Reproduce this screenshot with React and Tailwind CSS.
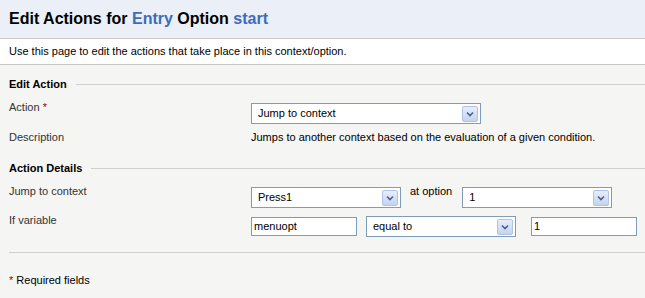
import React from "react";

const font = { fontFamily: '"Liberation Sans", Arial, sans-serif' };

function Arrow() {
  return (
    <span className="absolute right-[2px] top-1/2 -translate-y-1/2 flex h-[16px] w-[16px] items-center justify-center rounded-[2px] border border-[#b1c3e4] bg-gradient-to-b from-[#e6eefc] to-[#c3d3f1]">
      <svg width="8" height="6" viewBox="0 0 8 6">
        <path d="M1 1.5 L4 4.5 L7 1.5" fill="none" stroke="#4d6185" strokeWidth="1.6" />
      </svg>
    </span>
  );
}

function Select({ value, className }) {
  return (
    <div className={`relative flex h-[21px] items-center border border-[#7f9db9] bg-white pl-[6px] text-[11px] leading-[13px] text-black ${className}`}>
      {value}
      <Arrow />
    </div>
  );
}

function Input({ value, className }) {
  return (
    <div className={`flex h-[19px] items-center border border-[#7f9db9] bg-white pl-[2px] text-[11px] leading-[13px] text-black ${className}`}>
      {value}
    </div>
  );
}

function Section({ title, className }) {
  return (
    <div className={`flex h-[13px] items-center pl-[9px] ${className}`}>
      <span className="text-[11px] font-bold leading-[13px] text-black">{title}</span>
      <span className="ml-[9px] h-px flex-1 bg-[#cfcfcf]" />
    </div>
  );
}

export default function App() {
  return (
    <div className="h-[298px] w-[645px] overflow-hidden bg-[#f5f5f3] text-[11px] leading-[13px]" style={font}>
      <div className="flex h-[39px] items-center border-b border-[#c8c8c8] bg-[#ebeff8] pl-[9px]">
        <h1 className="text-[16px] font-bold leading-[20px] text-black">
          Edit Actions for <span className="text-[#3b6cbd]">Entry</span> Option <span className="text-[#3b6cbd]">start</span>
        </h1>
      </div>
      <div className="flex h-[26px] items-center border-b border-[#c8c8c8] bg-white pl-[9px] text-black">
        Use this page to edit the actions that take place in this context/option.
      </div>

      <Section title="Edit Action" className="mt-[13px]" />
      <div className="mt-[10px] flex items-start pl-[9px]">
        <div className="w-[242px] text-[#333]">
          Action <span className="text-[#a00000]">*</span>
        </div>
        <Select value="Jump to context" className="mt-[2px] w-[230px]" />
      </div>
      <div className="mt-[7px] flex pl-[9px]">
        <div className="w-[242px] text-[#333]">Description</div>
        <div className="text-black">Jumps to another context based on the evaluation of a given condition.</div>
      </div>

      <Section title="Action Details" className="mt-[18px]" />
      <div className="mt-[10px] flex items-start pl-[9px]">
        <div className="w-[242px] text-[#333]">Jump to context</div>
        <Select value="Press1" className="mt-[2px] w-[150px]" />
        <span className="ml-[9px] text-black">at option</span>
        <Select value="1" className="ml-[10px] mt-[2px] w-[150px]" />
      </div>
      <div className="mt-[6px] flex items-start pl-[9px]">
        <div className="w-[242px] text-[#333]">If variable</div>
        <Input value="menuopt" className="mt-[3px] w-[106px]" />
        <Select value="equal to" className="ml-[9px] mt-[2px] w-[150px]" />
        <Input value="1" className="ml-[15px] mt-[3px] w-[106px]" />
      </div>

      <div className="ml-[9px] mt-[15px] h-px bg-[#cfcfcf]" />
      <div className="mt-[21px] pl-[9px] text-black">
        <span className="text-[#a00000]">*</span> Required fields
      </div>
    </div>
  );
}
